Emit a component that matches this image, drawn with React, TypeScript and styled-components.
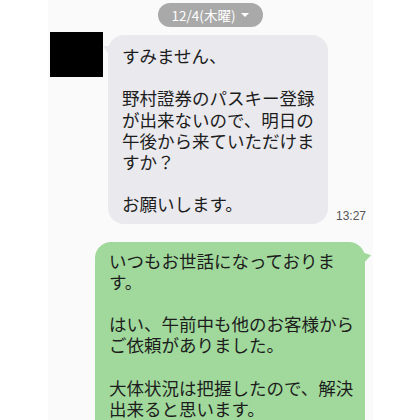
import React from 'react';
import styled, { createGlobalStyle } from 'styled-components';

const GlobalStyle = createGlobalStyle`
  body {
    margin: 0;
    background: #ffffff;
    font-family: 'Noto Sans CJK JP', 'Noto Sans', sans-serif;
  }
`;

const Page = styled.div`
  width: 420px;
  height: 420px;
  overflow: hidden;
  display: flex;
  padding-left: 48px;
  box-sizing: border-box;
`;

const Screen = styled.div`
  width: 325px;
  background: #fafafa;
  display: flex;
  flex-direction: column;
  padding-top: 3px;
`;

const DatePill = styled.div`
  align-self: center;
  display: flex;
  align-items: center;
  gap: 6px;
  height: 24px;
  padding: 0 14px;
  border-radius: 12px;
  background: #a9a9a9;
  color: #ffffff;
  font-size: 13.5px;
  line-height: 24px;
`;

const Caret = styled.span`
  width: 0;
  height: 0;
  border-left: 4px solid transparent;
  border-right: 4px solid transparent;
  border-top: 4px solid #ffffff;
`;

const IncomingRow = styled.div`
  display: flex;
  align-items: flex-start;
  margin-top: 5px;
  padding-left: 2px;
`;

const Avatar = styled.div`
  width: 53px;
  height: 45px;
  background: #000000;
  flex-shrink: 0;
`;

const BubbleGroup = styled.div`
  display: flex;
  align-items: flex-end;
  gap: 8px;
  margin: 3px 0 0 5px;
`;

const Bubble = styled.div<{ $mine?: boolean; $width: number }>`
  position: relative;
  width: ${(p) => p.$width}px;
  box-sizing: border-box;
  padding: ${(p) => (p.$mine ? '8px 8px 40px 14px' : '10px 8px 9px 14px')};
  border-radius: 16px;
  background: ${(p) => (p.$mine ? '#a0d99b' : '#e9e9ee')};

  &::before {
    content: '';
    position: absolute;
    top: 11px;
    width: 7px;
    height: 10px;
    background: inherit;
    ${(p) =>
      p.$mine
        ? 'right: -6px; clip-path: polygon(0 0, 100% 25%, 0 100%);'
        : 'left: -5px; clip-path: polygon(0 0, 100% 0, 100% 100%);'}
  }
`;

const MessageText = styled.div`
  color: #1d1d1d;
  font-size: 17.5px;
  line-height: 21.2px;
  white-space: pre;
`;

const Time = styled.span`
  font-family: 'Liberation Sans', sans-serif;
  font-size: 12px;
  color: #555555;
  margin-bottom: 1px;
`;

const OutgoingRow = styled.div`
  display: flex;
  justify-content: flex-end;
  margin-top: 18px;
  padding-right: 8px;
`;

const incoming = `すみません、

野村證券のパスキー登録
が出来ないので、明日の
午後から来ていただけま
すか？

お願いします。`;

const outgoing = `いつもお世話になっておりま
す。

はい、午前中も他のお客様から
ご依頼がありました。

大体状況は把握したので、解決
出来ると思います。`;

export default function App() {
  return (
    <Page>
      <GlobalStyle />
      <Screen>
        <DatePill>
          12/4(木曜)
          <Caret />
        </DatePill>
        <IncomingRow>
          <Avatar />
          <BubbleGroup>
            <Bubble $width={220}>
              <MessageText>{incoming}</MessageText>
            </Bubble>
            <Time>13:27</Time>
          </BubbleGroup>
        </IncomingRow>
        <OutgoingRow>
          <Bubble $mine $width={270}>
            <MessageText>{outgoing}</MessageText>
          </Bubble>
        </OutgoingRow>
      </Screen>
    </Page>
  );
}
